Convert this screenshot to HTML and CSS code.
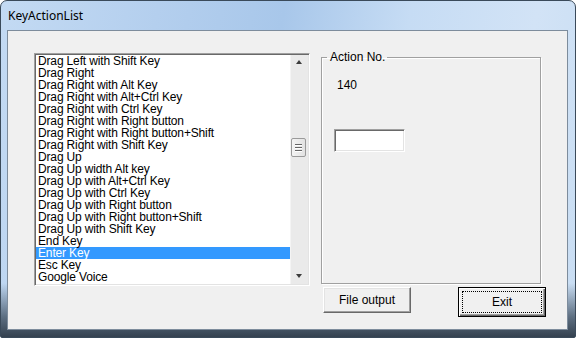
FILE: index.html
```html
<!DOCTYPE html>
<html lang="en">
<head>
  <meta charset="utf-8" />
  <title>KeyActionList</title>
  <link rel="stylesheet" href="styles.css">
</head>
<body>
  <div class="window">
    <div class="titlebar">KeyActionList</div>
    <div class="client">
      <div class="listbox">
        <ul class="items">
          <li>Drag Left with Shift Key</li>
          <li>Drag Right</li>
          <li>Drag Right with Alt Key</li>
          <li>Drag Right with Alt+Ctrl Key</li>
          <li>Drag Right with Ctrl Key</li>
          <li>Drag Right with Right button</li>
          <li>Drag Right with Right button+Shift</li>
          <li>Drag Right with Shift Key</li>
          <li>Drag Up</li>
          <li>Drag Up width Alt key</li>
          <li>Drag Up with Alt+Ctrl Key</li>
          <li>Drag Up with Ctrl Key</li>
          <li>Drag Up with Right button</li>
          <li>Drag Up with Right button+Shift</li>
          <li>Drag Up with Shift Key</li>
          <li>End Key</li>
          <li class="sel">Enter Key</li>
          <li>Esc Key</li>
          <li>Google Voice</li>
          <li>iTunes Full</li>
        </ul>
        <div class="scrollbar">
          <div class="arrow up"></div>
          <div class="track"><div class="thumb"><span></span><span></span><span></span></div></div>
          <div class="arrow down"></div>
        </div>
      </div>
      <div class="side">
        <fieldset class="group">
          <legend>Action No.</legend>
          <div class="num">140</div>
          <input class="field" type="text">
        </fieldset>
        <div class="buttons">
          <button class="btn">File output</button>
          <button class="btn default"><span>Exit</span></button>
        </div>
      </div>
    </div>
  </div>
</body>
</html>
```

FILE: styles.css
```css
body{margin:0;font-family:"Liberation Sans",Arial,sans-serif;font-size:12px;color:#000}
.window{box-sizing:border-box;width:576px;height:338px;border:1px solid #3a4a5a;border-radius:7px 7px 2px 2px;padding:0 7px 7px 6px;
  background:linear-gradient(to bottom,rgba(60,76,92,0) 0,rgba(60,76,92,0) 84%,rgba(75,92,110,.85) 94%,#34414f 100%),
  linear-gradient(100deg,#c3daf3 0,#b4cfee 25%,#a8c7ea 45%,#c6dcf4 65%,#d2e3f6 85%,#c8ddf3 100%)}
.titlebar{height:29px;line-height:30px;padding-left:1px;font-family:"Noto Sans","Liberation Sans",sans-serif;font-size:12px;color:#000}
.client{box-sizing:border-box;height:300px;background:#f0f0f0;border:1px solid #7d8c9c;display:flex;padding:20px 0 0 26px}
.listbox{box-sizing:border-box;width:276px;height:233px;margin-top:2px;background:#fff;display:flex;
  border:1px solid;border-color:#a0a0a0 #fff #fff #a0a0a0;box-shadow:inset 1px 1px #696969,inset -1px -1px #e3e3e3;padding:1px}
.items{list-style:none;margin:0;padding:0;width:255px;overflow:hidden}
.items li{height:12px;line-height:12px;padding-left:2px;white-space:nowrap;letter-spacing:-.15px}
.items li.sel{background:#3399ff;color:#fff}
.scrollbar{width:17px;display:flex;flex-direction:column;background:#eaeaea;border-left:1px solid #f4f4f4}
.arrow{height:17px;position:relative}
.arrow::after{content:"";position:absolute;left:5px;width:0;height:0;border-left:3.5px solid transparent;border-right:3.5px solid transparent}
.arrow.up::after{top:5px;border-bottom:4px solid #3c3c3c}
.arrow.down::after{bottom:6px;border-top:4px solid #3c3c3c}
.track{flex:1}
.thumb{box-sizing:border-box;width:15px;height:19px;margin:66px 0 0 0;border:1px solid #9a9a9a;border-radius:2px;background:linear-gradient(to right,#f4f4f4,#e2e2e2);
  display:flex;flex-direction:column;align-items:center;justify-content:center;gap:1px}
.thumb span{display:block;width:7px;height:1px;background:#666;border-bottom:1px solid #fff}
.side{margin-left:11px;display:flex;flex-direction:column}
.group{box-sizing:border-box;width:220px;height:233px;margin:0;padding:0 0 0 12px;border:1px solid #a0a0a0;box-shadow:inset 1px 1px #fff,1px 1px #fff}
.group legend{margin-left:-7px;padding:0 2px 0 3px;line-height:12px}
.num{margin:16px 0 0 3px;line-height:12px}
.field{box-sizing:border-box;display:block;width:71px;height:23px;margin-top:38px;background:#fff;padding:0;
  border:1px solid;border-color:#a0a0a0 #fff #fff #a0a0a0;box-shadow:inset 1px 1px #696969,inset -1px -1px #e3e3e3}
.buttons{display:flex;align-items:flex-start;margin-top:3px}
.btn{box-sizing:border-box;font:inherit;color:#000;background:#f0f0f0;width:88px;height:26px;margin:0 0 0 2px;padding:0;
  border:1px solid;border-color:#fff #696969 #696969 #fff;box-shadow:inset -1px -1px #a0a0a0,inset 1px 1px #e3e3e3}
.btn.default{margin-left:47px;height:30px;border:1px solid #000;box-shadow:inset 1px 1px #fff,inset -1px -1px #696969,inset -2px -2px #a0a0a0;padding:3px}
.btn.default span{display:flex;height:100%;align-items:center;justify-content:center;outline:1px dotted #000;outline-offset:-1px}
```
